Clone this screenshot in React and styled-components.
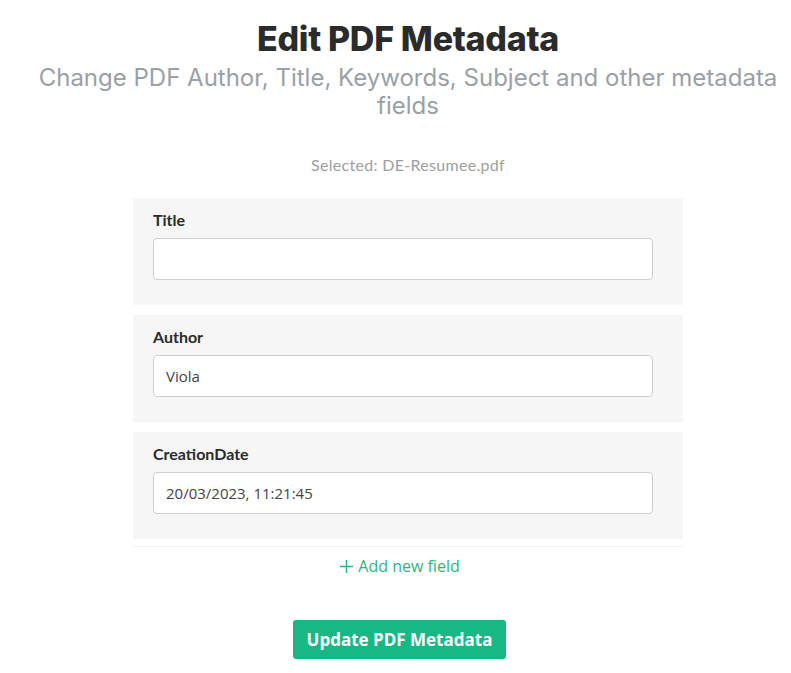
import styled, { createGlobalStyle } from "styled-components";

const GlobalStyle = createGlobalStyle`
  body {
    margin: 0;
    background: #ffffff;
    font-family: "Open Sans", "Noto Sans", sans-serif;
  }
`;

const Page = styled.main`
  margin-left: 25px;
  width: 766px;
  display: flex;
  flex-direction: column;
  align-items: center;
  padding-top: 18px;
`;

const Heading = styled.h1`
  margin: 0;
  font-family: Inter, sans-serif;
  font-weight: 800;
  font-size: 34px;
  line-height: 42px;
  letter-spacing: -0.3px;
  color: #2b2b2b;
`;

const Subtitle = styled.p`
  margin: 4px 0 0;
  font-family: Inter, sans-serif;
  font-size: 24px;
  line-height: 28px;
  color: #9aa0a6;
  text-align: center;
`;

const Selected = styled.p`
  margin: 35px 0 0;
  font-family: Lato, sans-serif;
  font-size: 16px;
  line-height: 20px;
  letter-spacing: 0.3px;
  color: #9e9e9e;
`;

const Fields = styled.div`
  margin-top: 23px;
  width: 550px;
  display: flex;
  flex-direction: column;
  gap: 10px;
  padding-bottom: 7px;
  border-bottom: 1px solid #f3f3f3;
`;

const Panel = styled.div`
  background: #f6f6f6;
  padding: 12px 30px 25px 20px;
  display: flex;
  flex-direction: column;
`;

const Label = styled.label`
  font-family: Lato, sans-serif;
  font-weight: 700;
  font-size: 16px;
  line-height: 20px;
  color: #2b2b2b;
  margin-bottom: 8px;
`;

const Input = styled.input`
  box-sizing: border-box;
  width: 100%;
  height: 42px;
  border: 1px solid #cfcfcf;
  border-radius: 4px;
  background: #fff;
  padding: 0 12px;
  font-family: "Open Sans", sans-serif;
  font-size: 15px;
  color: #444;
  outline: none;
`;

const AddField = styled.button`
  margin: 8px 17px 0 0;
  border: 0;
  background: none;
  display: flex;
  align-items: center;
  gap: 4px;
  font-family: "Open Sans", sans-serif;
  font-size: 16px;
  color: #2db482;
  cursor: pointer;
  padding: 0;
`;

const SubmitButton = styled.button`
  margin: 43px 17px 0 0;
  border: 0;
  border-radius: 3px;
  background: #18b884;
  color: #fff;
  font-family: "Open Sans", sans-serif;
  font-weight: 700;
  font-size: 17px;
  height: 39px;
  padding: 0 14px;
  cursor: pointer;
`;

const fields = [
  { name: "Title", value: "" },
  { name: "Author", value: "Viola" },
  { name: "CreationDate", value: "20/03/2023, 11:21:45" },
];

export default function App() {
  return (
    <>
      <GlobalStyle />
      <Page>
        <Heading>Edit PDF Metadata</Heading>
        <Subtitle>
          Change PDF Author, Title, Keywords, Subject and other metadata fields
        </Subtitle>
        <Selected>Selected: DE-Resumee.pdf</Selected>
        <Fields>
          {fields.map((f) => (
            <Panel key={f.name}>
              <Label>{f.name}</Label>
              <Input defaultValue={f.value} />
            </Panel>
          ))}
        </Fields>
        <AddField>
          <svg width="15" height="15" viewBox="0 0 15 15">
            <path d="M7.5 1v13M1 7.5h13" stroke="currentColor" strokeWidth="1.5" />
          </svg>
          Add new field
        </AddField>
        <SubmitButton>Update PDF Metadata</SubmitButton>
      </Page>
    </>
  );
}
